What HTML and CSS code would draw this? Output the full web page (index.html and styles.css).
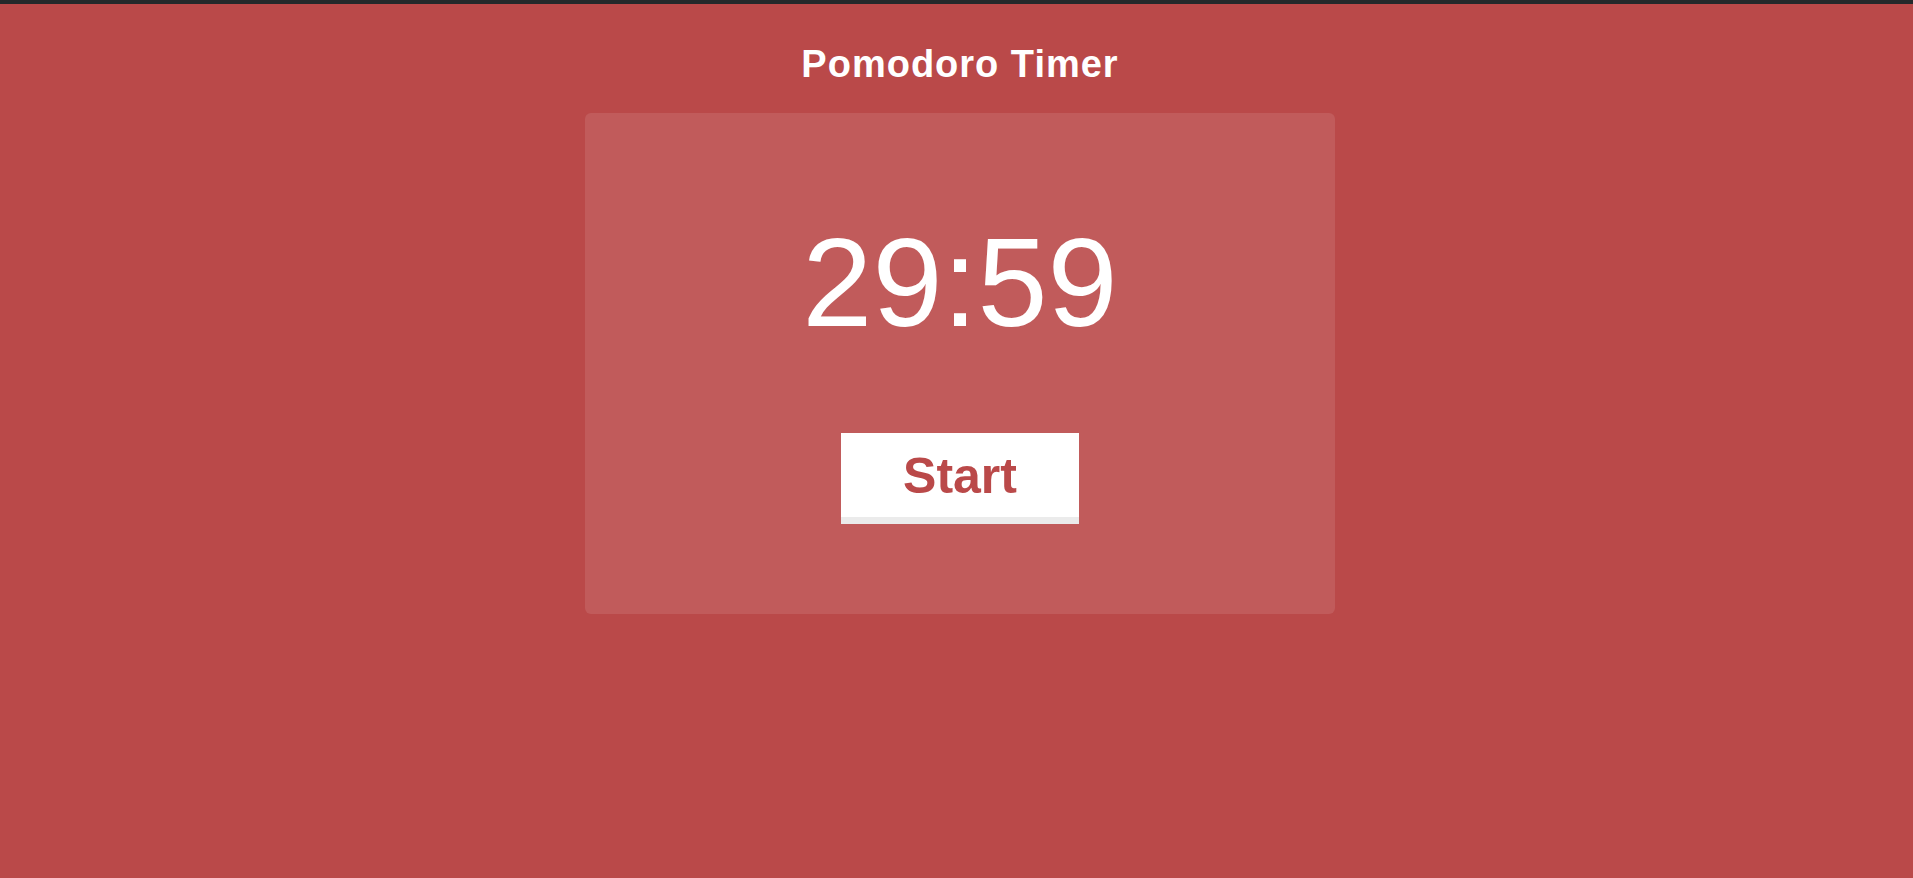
FILE: index.html
```html
<!DOCTYPE html>
<html lang="en">
<head>
<meta charset="utf-8">
<title>Pomodoro Timer</title>
<link rel="stylesheet" href="styles.css">
</head>
<body>
<div class="topbar"></div>
<main class="page">
  <h1 class="title">Pomodoro Timer</h1>
  <section class="card">
    <div class="timer">29:59</div>
    <button class="start-btn">Start</button>
  </section>
</main>
</body>
</html>
```
FILE: styles.css
```css
html, body {
  margin: 0;
  padding: 0;
}
body {
  background: #ba4949;
  font-family: "Liberation Sans", Arial, sans-serif;
  color: #fff;
  min-height: 100vh;
}
.topbar {
  height: 4px;
  background: #25292b;
}
.page {
  display: flex;
  flex-direction: column;
  align-items: center;
  padding-left: 7px;
}
.title {
  margin: 41px 0 0 0;
  font-size: 38px;
  line-height: 38px;
  font-weight: 700;
  letter-spacing: 1px;
}
.card {
  margin-top: 30px;
  width: 750px;
  box-sizing: border-box;
  padding: 107px 0 97px;
  background: rgba(255, 255, 255, 0.1);
  border-radius: 6px;
  display: flex;
  flex-direction: column;
  align-items: center;
}
.timer {
  font-size: 126px;
  line-height: 126px;
  height: 126px;
}
.start-btn {
  margin-top: 87px;
  width: 238px;
  height: 84px;
  box-sizing: border-box;
  padding: 18px 0 16px;
  border: none;
  border-radius: 0;
  background: #fff;
  color: #ba4949;
  font-family: "Liberation Sans", Arial, sans-serif;
  font-size: 50px;
  line-height: 50px;
  font-weight: 700;
  box-shadow: 0 7px 0 #ebebeb;
  cursor: pointer;
}
```
